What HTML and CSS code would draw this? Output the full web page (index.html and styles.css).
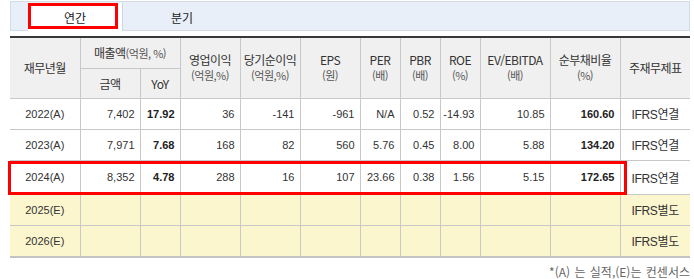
FILE: index.html
```html
<!DOCTYPE html>
<html lang="ko">
<head>
<meta charset="utf-8">
<link rel="stylesheet" href="styles.css">
</head>
<body>
<div class="wrap">
  <div class="tabbar">
    <div class="tab tab-on"><span>연간</span></div>
    <div class="tab"><span>분기</span></div>
  </div>
  <div class="tablebox">
    <table class="fin">
      <colgroup>
        <col class="w70"><col class="w60"><col class="w40"><col class="w60"><col class="w60"><col class="w60">
        <col class="w40"><col class="w40"><col class="w40"><col class="w70"><col class="w70"><col class="w70">
      </colgroup>
      <thead>
        <tr class="h1">
          <th rowspan="2">재무년월</th>
          <th colspan="2">매출액<small>(억원, %)</small></th>
          <th rowspan="2">영업이익<br><small>(억원,%)</small></th>
          <th rowspan="2">당기순이익<br><small>(억원,%)</small></th>
          <th rowspan="2">EPS<br><small>(원)</small></th>
          <th rowspan="2">PER<br><small>(배)</small></th>
          <th rowspan="2">PBR<br><small>(배)</small></th>
          <th rowspan="2">ROE<br><small>(%)</small></th>
          <th rowspan="2">EV/EBITDA<br><small>(배)</small></th>
          <th rowspan="2">순부채비율<br><small>(%)</small></th>
          <th rowspan="2">주재무제표</th>
        </tr>
        <tr class="h2">
          <th>금액</th>
          <th>YoY</th>
        </tr>
      </thead>
      <tbody>
        <tr>
          <td class="c">2022(A)</td><td>7,402</td><td class="b">17.92</td><td>36</td><td>-141</td><td>-961</td><td>N/A</td><td>0.52</td><td>-14.93</td><td>10.85</td><td class="b">160.60</td><td class="c k">IFRS연결</td>
        </tr>
        <tr>
          <td class="c">2023(A)</td><td>7,971</td><td class="b">7.68</td><td>168</td><td>82</td><td>560</td><td>5.76</td><td>0.45</td><td>8.00</td><td>5.88</td><td class="b">134.20</td><td class="c k">IFRS연결</td>
        </tr>
        <tr class="hl">
          <td class="c">2024(A)</td><td>8,352</td><td class="b">4.78</td><td>288</td><td>16</td><td>107</td><td>23.66</td><td>0.38</td><td>1.56</td><td>5.15</td><td class="b">172.65</td><td class="c k">IFRS연결</td>
        </tr>
        <tr class="est">
          <td class="c">2025(E)</td><td></td><td></td><td></td><td></td><td></td><td></td><td></td><td></td><td></td><td></td><td class="c k">IFRS별도</td>
        </tr>
        <tr class="est">
          <td class="c">2026(E)</td><td></td><td></td><td></td><td></td><td></td><td></td><td></td><td></td><td></td><td></td><td class="c k">IFRS별도</td>
        </tr>
      </tbody>
    </table>
    <div class="mark"></div>
  </div>
  <p class="note">*(A) 는 실적,(E)는 컨센서스</p>
</div>
</body>
</html>
```

FILE: styles.css
```css
html, body {
  margin: 0;
  padding: 0;
  background: #fff;
}
body {
  font-family: "Liberation Sans", "Noto Sans CJK KR", sans-serif;
  color: #333;
  font-size: 12px;
}
.wrap {
  width: 680px;
  padding-left: 10px;
  padding-top: 1px;
}
.tabbar {
  height: 28px;
  border: 1px solid #d3dbe6;
  background: #e8eff8;
  display: flex;
  padding-left: 17px;
  box-sizing: content-box;
}
.tab {
  width: 95px;
  margin-top: 1px;
  height: 28px;
  display: flex;
  align-items: center;
  justify-content: center;
  font-size: 12px;
  color: #222;
  box-sizing: border-box;
}
.tab span {
  font-family: "Noto Sans CJK KR", sans-serif;
}
.tab-on {
  width: 95px;
  background: #fff;
  border-right: 1px solid #cdd5e0;
  position: relative;
}
.tab-on::after {
  content: "";
  position: absolute;
  left: 0;
  top: 0;
  width: 90px;
  height: 26px;
  border: 3px solid #f00;
  box-sizing: border-box;
}
.tab + .tab {
  width: 118px;
}
.tablebox {
  position: relative;
  margin-top: 5px;
}
.fin {
  width: 680px;
  border-collapse: collapse;
  table-layout: fixed;
  border-top: 2px solid #383838;
  border-bottom: 2px solid #c4c4c4;
}
.w70 { width: 70px; }
.w60 { width: 60px; }
.w40 { width: 40px; }
.fin th {
  background: #f0f0f0;
  font-weight: normal;
  color: #333;
  font-family: "Noto Sans CJK KR", sans-serif;
  font-size: 12px;
  line-height: 15px;
  border: 1px solid #c8c8c8;
  border-top: none;
  padding: 0;
  text-align: center;
  letter-spacing: -0.5px;
}
.fin th small {
  font-size: 11px;
  color: #555;
}
.fin tr.h1 { height: 31px; }
.fin tr.h2 { height: 30px; }
.fin th:first-child { border-left: none; }
.fin th:last-child { border-right: none; }
.fin td {
  height: 30px;
  border: 1px solid #c8c8c8;
  padding: 0 5px 0 0;
  text-align: right;
  font-size: 11px;
  color: #333;
  white-space: nowrap;
}
.fin td:first-child { border-left: none; }
.fin td:last-child { border-right: none; }
.fin td.c {
  text-align: center;
  padding: 0;
  font-size: 11px;
}
.fin td.k {
  font-size: 12px;
  letter-spacing: -0.3px;
}
.fin td.b {
  font-weight: bold;
  color: #222;
}
.fin tr.hl td { height: 33px; }
.fin tr.est td { background: #fcf6cf; }
.mark {
  position: absolute;
  left: -2px;
  top: 125px;
  width: 619px;
  height: 34px;
  border: 3px solid #f00;
  box-sizing: border-box;
  pointer-events: none;
}
.note {
  margin: 5px 0 0 0;
  text-align: right;
  font-family: "Noto Sans CJK KR", sans-serif;
  font-size: 12px;
  color: #666;
  word-spacing: 1px;
}
```
